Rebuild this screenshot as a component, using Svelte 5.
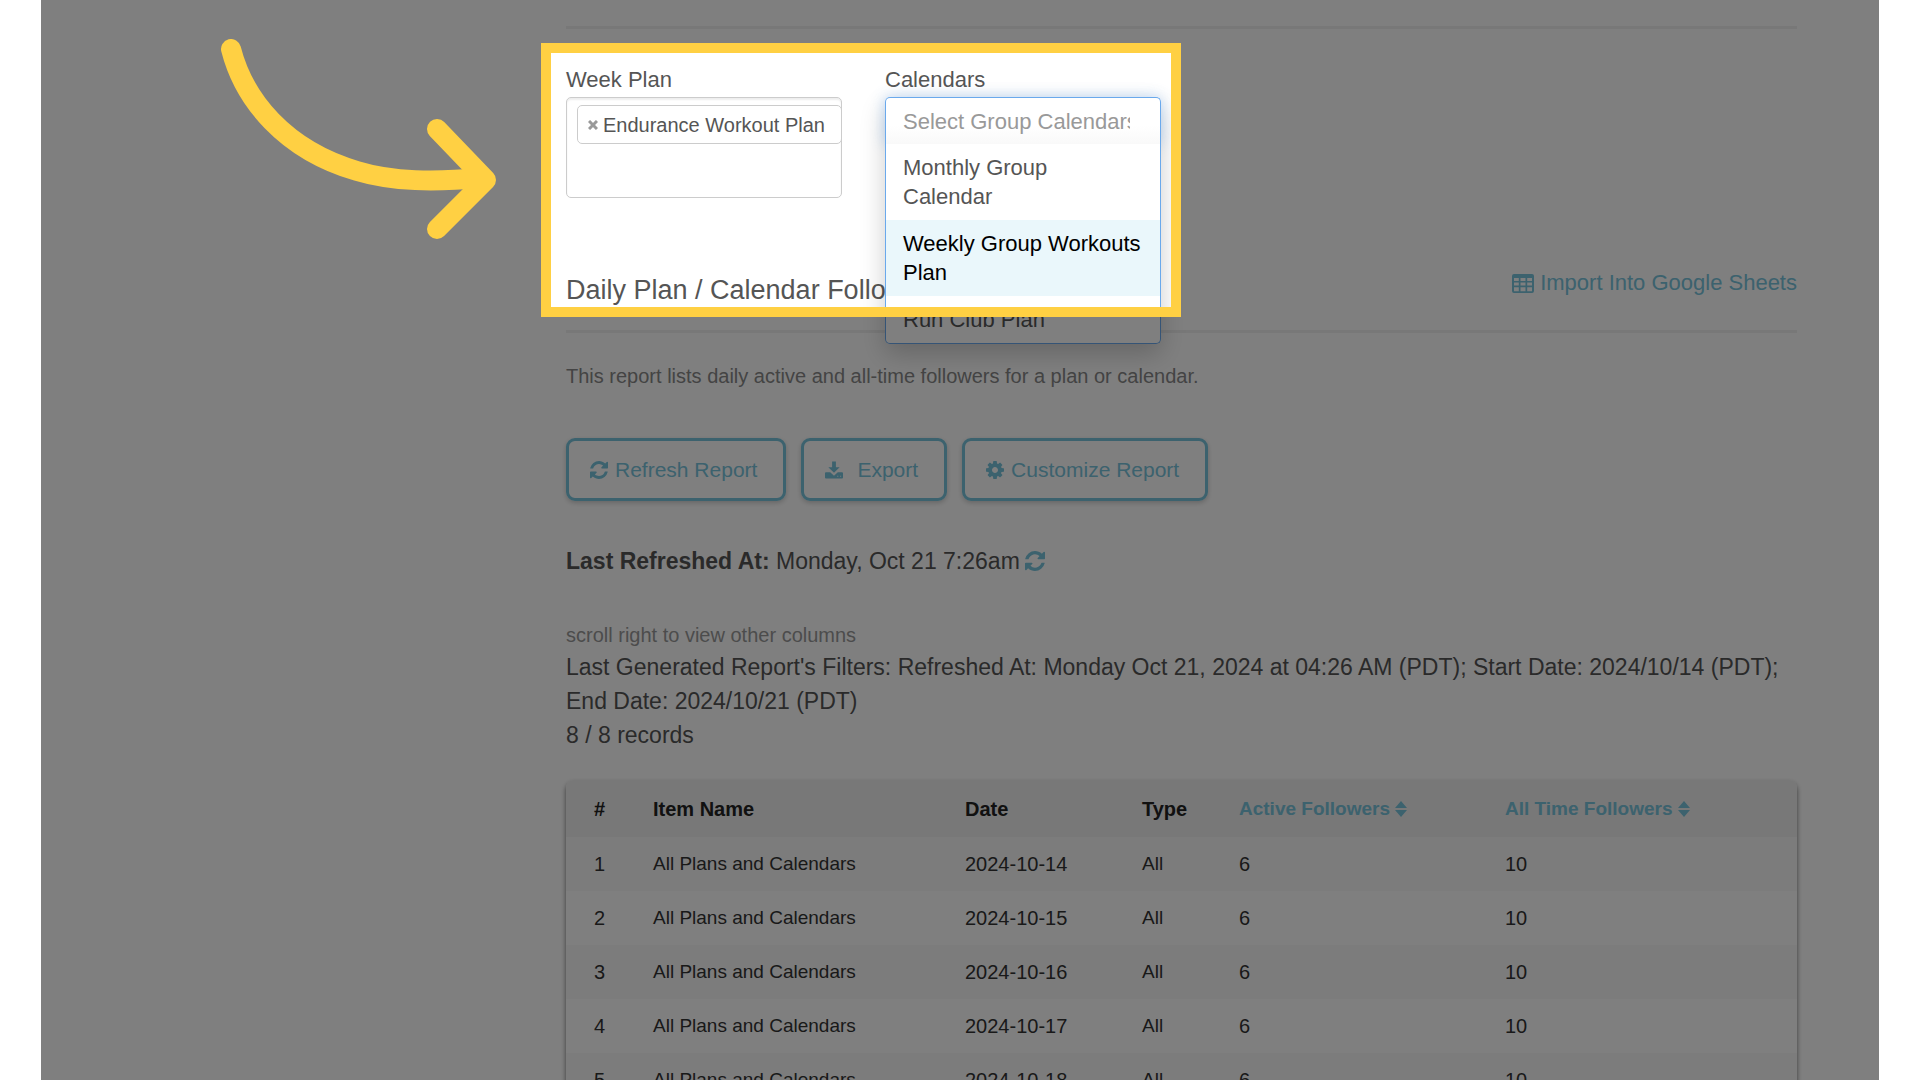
<script>
  const columns = [
    { label: '#' },
    { label: 'Item Name' },
    { label: 'Date' },
    { label: 'Type' },
    { label: 'Active Followers', sortable: true },
    { label: 'All Time Followers', sortable: true }
  ];

  const rows = [14, 15, 16, 17, 18, 19, 20, 21].map((day, i) => ({
    id: i + 1,
    name: 'All Plans and Calendars',
    date: `2024-10-${day}`,
    type: 'All',
    active: 6,
    total: 10
  }));

  const options = ['Monthly Group\nCalendar', 'Weekly Group Workouts\nPlan', 'Run Club Plan'];
  const highlighted = 1;
</script>

{#snippet refreshIcon()}
  <svg class="icon" viewBox="0 0 1536 1536" aria-hidden="true">
    <path d="M1511 928q0 5-1 7-64 268-268 434.500t-478 166.500q-146 0-282.500-55t-243.500-157l-129 129q-19 19-45 19t-45-19-19-45v-448q0-26 19-45t45-19h448q26 0 45 19t19 45-19 45l-137 137q71 66 161 102t187 36q134 0 250-65t186-179q11-17 53-117 8-23 30-23h192q13 0 22.500 9.500t9.500 22.500zm25-800v448q0 26-19 45t-45 19h-448q-26 0-45-19t-19-45 19-45l138-138q-148-137-349-137-134 0-250 65t-186 179q-11 17-53 117-8 23-30 23h-199q-13 0-22.500-9.500t-9.500-22.500v-7q65-268 270-434.500t480-166.500q146 0 284 55.500t245 156.500l130-129q19-19 45-19t45 19 19 45z" />
  </svg>
{/snippet}

<div class="page">
  <main>
    <hr />
    <form class="filters" onsubmit={(e) => e.preventDefault()}>
      <div class="field">
        <label for="week-plan">Week Plan</label>
        <div class="multi">
          <span class="tag">
            <button type="button" class="remove" aria-label="Remove Endurance Workout Plan">
              <svg viewBox="0 0 10 10" aria-hidden="true"><path d="M1 1L9 9M9 1L1 9" /></svg>
            </button>
            Endurance Workout Plan
          </span>
          <input id="week-plan" type="text" />
        </div>
      </div>
      <div class="field">
        <label for="calendars">Calendars</label>
        <div class="combo">
          <div class="search">
            <input id="calendars" type="text" placeholder="Select Group Calendars" />
          </div>
          <ul class="options">
            {#each options as option, i}
              <li class:active={i === highlighted}>{option}</li>
            {/each}
          </ul>
        </div>
      </div>
    </form>

    <header>
      <h2>Daily Plan / Calendar Followers</h2>
      <a class="import" href="#import">
        <svg viewBox="0 0 22 19" aria-hidden="true">
          <path fill-rule="evenodd" d="M2 0h18a2 2 0 0 1 2 2v15a2 2 0 0 1-2 2H2a2 2 0 0 1-2-2V2a2 2 0 0 1 2-2zM2 4v3h4.800V4zM8.500 4v3h5V4zM15.200 4v3H20V4zM2 8.600v3h4.800v-3zM8.500 8.600v3h5v-3zM15.200 8.600v3H20v-3zM2 13.200v4h4.800v-4zM8.500 13.200v4h5v-4zM15.200 13.200v4H20v-4z" />
        </svg>
        Import Into Google Sheets
      </a>
    </header>
    <hr />

    <p class="about">This report lists daily active and all-time followers for a plan or calendar.</p>

    <div class="actions">
      <button type="button">{@render refreshIcon()}Refresh Report</button>
      <button type="button" class="export">
        <svg class="icon" viewBox="0 0 19 18" aria-hidden="true">
          <path fill-rule="evenodd" d="M7.500 0h4v6h4l-6 6-6-6h4zM1 11.500h4.500l4 3.500 4-3.500H18a1 1 0 0 1 1 1V17a1 1 0 0 1-1 1H1a1 1 0 0 1-1-1v-4.500a1 1 0 0 1 1-1zM13 15v1h1v-1zM16 15v1h1v-1z" />
        </svg>Export
      </button>
      <button type="button">
        <svg class="icon" viewBox="0 0 1536 1536" aria-hidden="true">
          <path d="M1024 768q0-106-75-181t-181-75-181 75-75 181 75 181 181 75 181-75 75-181zm512-109v222q0 12-8 23t-20 13l-185 28q-19 54-39 91 35 50 107 138 10 12 10 25t-9 23q-27 37-99 108t-94 71q-12 0-26-9l-138-108q-44 23-91 38-16 136-29 186-7 28-36 28h-222q-14 0-24.500-8.500t-11.500-21.500l-28-184q-49-16-90-37l-141 107q-10 9-25 9-14 0-25-11-126-114-165-168-7-10-7-23 0-12 8-23 15-21 51-66.500t54-70.500q-27-50-41-99l-183-27q-13-2-21-12.500t-8-23.500v-222q0-12 8-23t19-13l186-28q14-46 39-92-40-57-107-138-10-12-10-24 0-10 9-23 26-36 98.500-107.500t94.500-71.500q13 0 26 10l138 107q44-23 91-38 16-136 29-186 7-28 36-28h222q14 0 24.500 8.500t11.500 21.500l28 184q49 16 90 37l142-107q9-9 24-9 13 0 25 10 129 119 165 170 7 8 7 22 0 12-8 23-15 21-51 66.500t-54 70.500q26 50 41 98l183 28q13 2 21 12.500t8 23.500z" />
        </svg>Customize Report
      </button>
    </div>

    <p class="refreshed">
      <span><strong>Last Refreshed At:</strong> Monday, Oct 21 7:26am</span>
      <button type="button" aria-label="Refresh">{@render refreshIcon()}</button>
    </p>

    <p class="hint">scroll right to view other columns</p>
    <p class="summary">
      Last Generated Report's Filters: Refreshed At: Monday Oct 21, 2024 at 04:26 AM (PDT); Start Date: 2024/10/14 (PDT); End Date: 2024/10/21 (PDT)
    </p>
    <p class="summary">8 / 8 records</p>

    <table>
      <colgroup>
        <col class="c-id" /><col class="c-name" /><col class="c-date" /><col class="c-type" /><col class="c-active" /><col />
      </colgroup>
      <thead>
        <tr>
          {#each columns as column}
            <th scope="col">
              {#if column.sortable}
                <a href="#sort">
                  {column.label}
                  <svg viewBox="0 0 12 16" aria-hidden="true"><path d="M6 0l6 7H0zM6 16l6-7H0z" /></svg>
                </a>
              {:else}
                {column.label}
              {/if}
            </th>
          {/each}
        </tr>
      </thead>
      <tbody>
        {#each rows as row}
          <tr>
            <td class="num">{row.id}</td>
            <td>{row.name}</td>
            <td class="num">{row.date}</td>
            <td>{row.type}</td>
            <td class="num">{row.active}</td>
            <td class="num">{row.total}</td>
          </tr>
        {/each}
      </tbody>
    </table>
  </main>

  <div class="spotlight"></div>
  <svg class="arrow" viewBox="0 0 330 204" aria-hidden="true">
    <path d="M51 10C64 61 105 111 177 132C213 143 255 143 302 139" />
    <path d="M257 90L306 141L257 190" />
  </svg>
</div>

<style>
  :global(body) {
    background: #fff;
    overflow: hidden;
  }

  .page {
    --link: #78c4dc;
    position: relative;
    box-sizing: border-box;
    height: 100vh;
    margin: 0 41px;
    padding: 26px 82px 0 525px;
    overflow: hidden;
    background: #fff;
    color: #555;
    font: 22px/30px "Liberation Sans", Arial, sans-serif;
  }

  p, h2, ul {
    margin: 0;
    padding: 0;
  }

  hr {
    height: 3px;
    margin: 0;
    border: 0;
    background: #f0f0f0;
  }

  a {
    color: var(--link);
    text-decoration: none;
  }

  button {
    padding: 0;
    border: 0;
    background: none;
    color: var(--link);
    font: inherit;
  }

  input {
    min-width: 0;
    padding: 0;
    border: 0;
    outline: 0;
    background: none;
    color: inherit;
    font: inherit;
  }

  input::placeholder {
    color: #999;
    opacity: 1;
  }

  .icon {
    width: 18px;
    height: 18px;
    fill: currentColor;
  }

  .filters {
    display: flex;
    gap: 43px;
    box-sizing: border-box;
    height: 193px;
    padding-top: 36px;
  }

  .field {
    width: 276px;
  }

  .field label {
    display: block;
    height: 32px;
  }

  .multi {
    box-sizing: border-box;
    height: 101px;
    padding: 7px 0 0 10px;
    overflow: hidden;
    border: 1px solid #ccc;
    border-radius: 5px;
    box-shadow: inset 0 2px 2px rgba(0, 0, 0, 0.07);
  }

  .multi input {
    width: 100%;
  }

  .tag {
    display: flex;
    align-items: center;
    gap: 5px;
    box-sizing: border-box;
    width: 265px;
    height: 39px;
    padding-left: 10px;
    border: 1px solid #ccc;
    border-radius: 5px;
    background: #fff;
    font-size: 20px;
    white-space: nowrap;
  }

  .remove {
    display: flex;
  }

  .remove svg {
    width: 10px;
    height: 10px;
    fill: none;
    stroke: #999;
    stroke-width: 3;
  }

  .combo {
    position: relative;
    z-index: 1;
    border-radius: 5px;
    box-shadow: 0 10px 26px rgba(0, 0, 0, 0.2);
  }

  .search {
    box-sizing: border-box;
    height: 47px;
    padding: 9px 17px 8px;
    border: 1px solid #6aa9ec;
    border-bottom: 0;
    border-radius: 5px 5px 0 0;
    background: linear-gradient(#fff 60%, #f9f9f9);
    box-shadow: 0 0 14px rgba(120, 175, 240, 0.45);
  }

  .search input {
    width: 227px;
  }

  .options {
    position: relative;
    border: 1px solid #6aa9ec;
    border-top: 0;
    border-radius: 0 0 5px 5px;
    background: #fff;
    list-style: none;
    line-height: 29px;
    white-space: pre-line;
  }

  .options li {
    padding: 9px 8px 9px 17px;
  }

  .options .active {
    background: #eaf7fb;
    color: #000;
  }

  header {
    display: flex;
    align-items: flex-start;
    justify-content: space-between;
    height: 108px;
    padding-top: 46px;
    box-sizing: border-box;
  }

  h2 {
    padding-top: 6px;
    font-size: 27px;
    font-weight: 400;
    line-height: 32px;
  }

  .import {
    display: flex;
    align-items: center;
    gap: 6px;
  }

  .import svg {
    width: 22px;
    height: 19px;
    fill: currentColor;
  }

  .about {
    padding-top: 28px;
    color: #888;
    font-size: 20px;
  }

  .actions {
    display: flex;
    gap: 15px;
    padding-top: 47px;
  }

  .actions button {
    display: flex;
    align-items: center;
    gap: 7px;
    height: 63px;
    padding: 0 26px 0 21px;
    border: 3px solid var(--link);
    border-radius: 9px;
    box-shadow: 0 2px 5px rgba(0, 0, 0, 0.2);
    font-size: 21px;
  }

  .actions .export {
    gap: 14px;
  }

  .refreshed {
    display: flex;
    align-items: center;
    gap: 5px;
    padding-top: 45px;
    font-size: 23px;
  }

  .refreshed button {
    display: flex;
  }

  .refreshed .icon {
    width: 20px;
    height: 20px;
  }

  .hint {
    padding-top: 44px;
    color: #999;
    font-size: 20px;
  }

  .summary {
    font-size: 23px;
    line-height: 34px;
  }

  table {
    width: 100%;
    margin-top: 28px;
    border-collapse: collapse;
    table-layout: fixed;
    overflow: hidden;
    border-radius: 8px;
    box-shadow: 0 3px 5px rgba(0, 0, 0, 0.55);
    color: #333;
    font-size: 19px;
  }

  .c-id { width: 77px; }
  .c-name { width: 312px; }
  .c-date { width: 177px; }
  .c-type { width: 97px; }
  .c-active { width: 266px; }

  th, td {
    height: 54px;
    padding: 0 0 0 10px;
    text-align: left;
  }

  th:first-child, td:first-child {
    padding-left: 28px;
  }

  th {
    height: 57px;
    background: #f0f0f0;
    color: #222;
    font-size: 20px;
  }

  th a {
    display: flex;
    align-items: center;
    gap: 5px;
    font-size: 19px;
  }

  th svg {
    width: 12px;
    height: 16px;
    fill: currentColor;
  }

  tbody tr:nth-child(odd) {
    background: #f8f8f8;
  }

  .num {
    font-size: 20px;
  }

  .spotlight {
    position: absolute;
    z-index: 2;
    top: 43px;
    left: 500px;
    width: 620px;
    height: 254px;
    border: 10px solid #ffd043;
    box-shadow: 0 0 0 2000px rgba(0, 0, 0, 0.5);
    pointer-events: none;
  }

  .arrow {
    position: absolute;
    z-index: 3;
    top: 39px;
    left: 139px;
    width: 330px;
    height: 204px;
    fill: none;
    stroke: #ffd043;
    stroke-width: 20;
    stroke-linecap: round;
    stroke-linejoin: round;
  }
</style>
